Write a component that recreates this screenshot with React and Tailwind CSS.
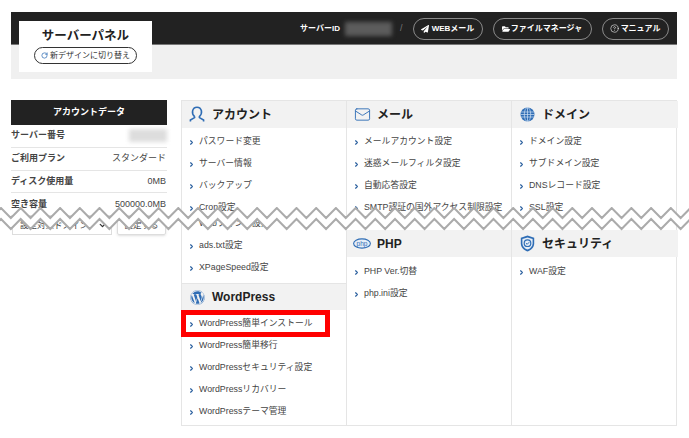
import React from "react";
import { ChevronRight, ChevronDown, RotateCw, CircleHelp, Mail } from "lucide-react";
import { FaPaperPlane, FaFolderOpen, FaWordpress } from "react-icons/fa";

const blue = "#2f6db5";

const UserIcon = () => (
  <svg width="16" height="17" viewBox="0 0 16 17" fill="none" stroke={blue} strokeWidth="1.6">
    <path d="M5.6 10.6 C3.6 8.6 3.2 6.6 3.6 4.8 C4.1 2.6 5.8 1.2 8 1.2 C10.2 1.2 11.9 2.6 12.4 4.8 C12.8 6.6 12.4 8.6 10.4 10.6 L10.4 11.6 L14.6 14 L14.6 15.6 M5.6 10.6 L5.6 11.6 L1.4 14 L1.4 15.6" />
  </svg>
);

const GlobeIcon = () => (
  <svg width="15" height="15" viewBox="0 0 15 15" fill="none">
    <circle cx="7.5" cy="7.5" r="7" fill={blue} />
    <g stroke="#cfe0f2" strokeWidth="0.7">
      <ellipse cx="7.5" cy="7.5" rx="3.2" ry="7" />
      <path d="M7.5 0.5 V14.5 M1 5 H14 M1 10 H14 M0.5 7.5 H14.5" />
    </g>
  </svg>
);

const PhpIcon = () => (
  <svg width="18" height="11" viewBox="0 0 18 11">
    <ellipse cx="9" cy="5.5" rx="8.4" ry="4.6" fill="#e6eef7" stroke={blue} strokeWidth="1.1" />
    <text x="9" y="7.6" textAnchor="middle" fontSize="6.5" fontWeight="400" fontFamily="Liberation Sans" fill={blue}>
      php
    </text>
  </svg>
);

const ShieldIcon = () => (
  <svg width="15" height="17" viewBox="0 0 15 17" fill="none">
    <path d="M7.5 0.6 L14.2 2.8 V8.4 C14.2 12.4 11 15 7.5 16.4 C4 15 0.8 12.4 0.8 8.4 V2.8 Z" fill={blue} />
    <path d="M7.5 2.4 L12.6 4 V8.4 C12.6 11.4 10.2 13.4 7.5 14.6 C4.8 13.4 2.4 11.4 2.4 8.4 V4 Z" fill="#e6eef7" />
    <circle cx="7.5" cy="8.2" r="3.3" stroke={blue} strokeWidth="1.2" />
    <path d="M5.9 8.1 L7.2 9.3 L9.2 7.2" stroke={blue} strokeWidth="1" />
  </svg>
);

const Section = ({ icon, title, items, topLine, cutAt, highlight, className, listClass = "pt-[3px]" }) => (
  <div className={className}>
    <div
      className={`flex items-center h-[27px] bg-[#f2f2f2] pl-[6px] ${topLine ? "border-t border-[#e5e5e5]" : ""}`}
    >
      <div className="w-[18px] flex justify-center">{icon}</div>
      <h2 className="ml-[6px] text-[12px] font-bold text-[#222]">{title}</h2>
    </div>
    <ul className={listClass}>
      {items.map((item, i) => (
        <li
          key={item}
          className={`relative flex items-center h-[22px] pl-[6px] text-[8.8px] text-[#444] ${i === cutAt ? "mt-[-6px]" : ""}`}
        >
          <ChevronRight size={7} strokeWidth={4} color="#2a5f9e" className="mr-[4px] shrink-0" />
          {item}
          {highlight === i && (
            <span className="absolute top-[-3px] bottom-[-2px] left-[-1px] w-[149px] border-[5px] border-[#ff0000]" />
          )}
        </li>
      ))}
    </ul>
  </div>
);

const HeaderButton = ({ icon, label, className }) => (
  <a className={`flex items-center justify-center h-[22px] rounded-full border border-[#8a8a8a] text-[8px] font-bold text-white ${className}`}>
    {icon}
    {label}
  </a>
);

const rows = [
  ["サーバー番号", null],
  ["ご利用プラン", "スタンダード"],
  ["ディスク使用量", "0MB"],
  ["空き容量", "500000.0MB"],
];

// tear across the page, two zigzag lines with white between
const Tear = () => {
  const top = [];
  const bottom = [];
  for (let i = -1; i < 72; i++) {
    const x = i * 9.85 + 1;
    const y = i % 2 === 0 ? 1 : 11;
    top.push(`${x},${y}`);
    bottom.push(`${x},${y + 11}`);
  }
  return (
    <svg width="689" height="24" className="absolute left-0 top-[207px]">
      <polygon points={[...top, ...[...bottom].reverse()].join(" ")} fill="#fff" />
      <polyline points={top.join(" ")} fill="none" stroke="#ababab" strokeWidth="2" />
      <polyline points={bottom.join(" ")} fill="none" stroke="#ababab" strokeWidth="2" />
    </svg>
  );
};

export default function App() {
  return (
    <div className="relative w-[689px] h-[438px] overflow-hidden bg-white px-[11px] pt-[12px] font-['Liberation_Sans','Noto_Sans_CJK_JP',sans-serif]">
      <header className="relative w-[666px]">
        <div className="flex items-center h-[33px] bg-[#222222] border-b border-[#777] pt-[1px]">
          <span className="ml-[289px] w-[42px] text-[8px] font-bold text-white whitespace-nowrap">サーバーID</span>
          <div className="ml-[3px] w-[47px] h-[14px] bg-[#5c5c5c] blur-[2px]" />
          <span className="ml-[8px] text-[9px] text-[#777]">/</span>
          <HeaderButton
            className="ml-[10px] w-[70px]"
            icon={<FaPaperPlane size={8} className="mr-[3px]" />}
            label="WEBメール"
          />
          <HeaderButton
            className="ml-[10px] w-[99px]"
            icon={<FaFolderOpen size={8} className="mr-[1px]" />}
            label="ファイルマネージャ"
          />
          <HeaderButton
            className="ml-[10px] w-[67px]"
            icon={<CircleHelp size={9} strokeWidth={1.5} className="mr-[2px]" />}
            label="マニュアル"
          />
        </div>
        <div className="h-[34px] bg-[#f0f0f0]" />
        <div className="absolute left-[8px] top-[9px] flex flex-col items-center w-[133px] h-[51px] bg-white pt-[7px]">
          <h1 className="text-[12.5px] leading-[17px] font-bold text-[#222]">サーバーパネル</h1>
          <a className="mt-[2px] flex items-center justify-center w-[103px] h-[17px] rounded-full border border-[#333] text-[8px] text-[#333]">
            <RotateCw size={7} strokeWidth={2.5} color={blue} className="mr-[2px]" />
            新デザインに切り替え
          </a>
        </div>
      </header>

      <main className="flex items-start mt-[21px]">
        <aside className="w-[156px] shrink-0">
          <div className="flex items-center justify-center h-[25px] bg-[#222222] text-[9px] font-bold text-white">
            アカウントデータ
          </div>
          {rows.map(([label, value]) => (
            <div
              key={label}
              className="flex items-center justify-between h-[22.8px] border-b border-[#e5e5e5] text-[9px] text-[#444] last:border-b-0"
            >
              <span className="font-bold">{label}</span>
              {value ? <span className="pr-[1px]">{value}</span> : <div className="w-[38px] h-[13px] bg-[#ddd] blur-[2px]" />}
            </div>
          ))}
          <div className="flex items-center mt-[-1px] pl-[1px]">
            <div className="flex items-center justify-between w-[100px] h-[20px] border border-[#ddd] pl-[7px] pr-[4px] text-[8.5px] text-[#444]">
              設定対象ドメイン
              <ChevronDown size={9} strokeWidth={3.5} color="#333" />
            </div>
            <button className="ml-[5px] w-[49px] h-[20px] border border-[#ddd] rounded-[2px] shadow-sm text-[8.5px] text-[#444]">
              設定する
            </button>
          </div>
        </aside>

        <section className="ml-[14px] w-[496px] h-[326px] grid grid-cols-[165px_165px_166px] border border-[#e5e5e5]">
          <div className="border-r border-[#e5e5e5]">
            <Section
              icon={<UserIcon />}
              title="アカウント"
              cutAt={4}
              items={["パスワード変更", "サーバー情報", "バックアップ", "Cron設定", "Webフォント設定", "ads.txt設定", "XPageSpeed設定"]}
            />
            <Section
              className="mt-[4px]"
              topLine
              icon={<FaWordpress size={15} color={blue} />}
              title="WordPress"
              highlight={0}
              items={["WordPress簡単インストール", "WordPress簡単移行", "WordPressセキュリティ設定", "WordPressリカバリー", "WordPressテーマ管理"]}
            />
          </div>
          <div className="border-r border-[#e5e5e5]">
            <Section
              icon={<Mail size={17} strokeWidth={1.3} color={blue} />}
              title="メール"
              items={["メールアカウント設定", "迷惑メールフィルタ設定", "自動応答設定", "SMTP認証の国外アクセス制限設定"]}
            />
            <Section className="mt-[11px]" listClass="pt-[4px]" icon={<PhpIcon />} title="PHP" items={["PHP Ver.切替", "php.ini設定"]} />
          </div>
          <div>
            <Section
              icon={<GlobeIcon />}
              title="ドメイン"
              items={["ドメイン設定", "サブドメイン設定", "DNSレコード設定", "SSL設定"]}
            />
            <Section className="mt-[11px]" listClass="pt-[4px]" icon={<ShieldIcon />} title="セキュリティ" items={["WAF設定"]} />
          </div>
        </section>
      </main>

      <Tear />
    </div>
  );
}
